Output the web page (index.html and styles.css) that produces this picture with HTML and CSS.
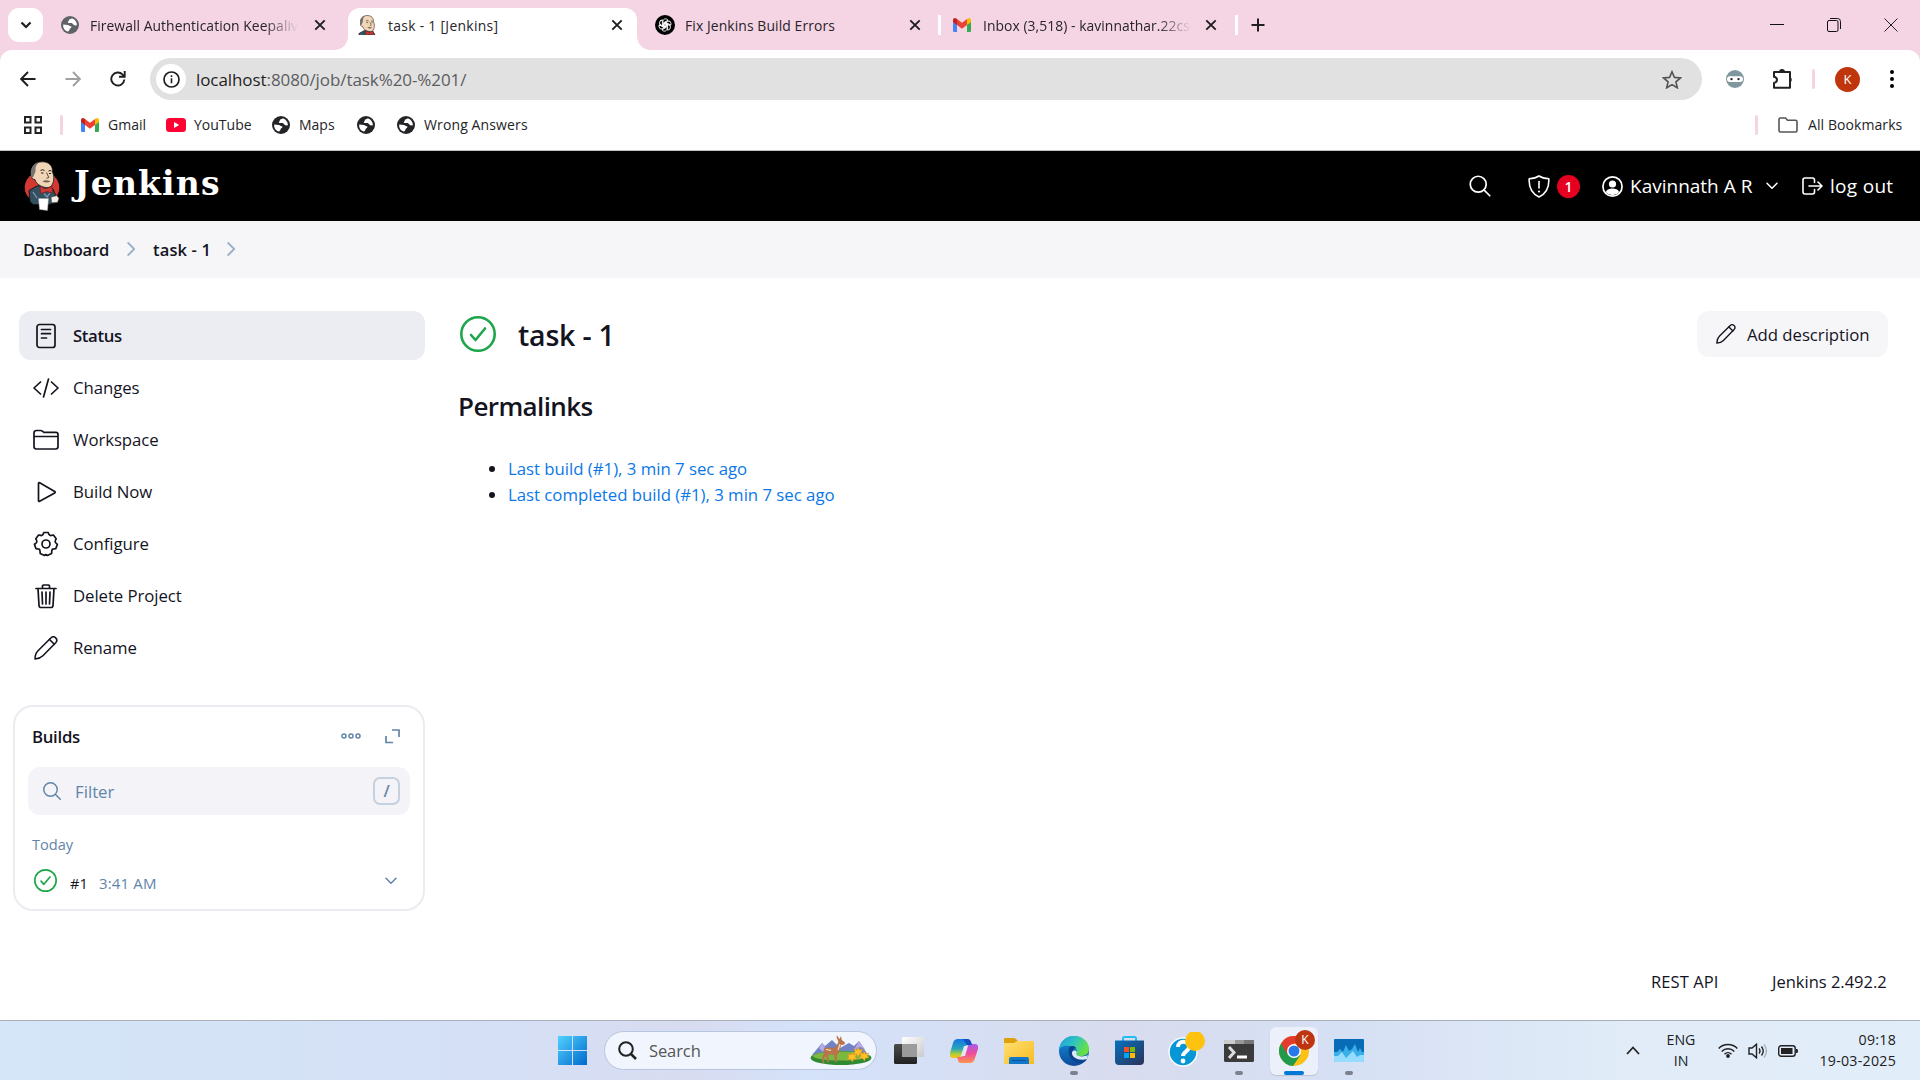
FILE: index.html
```html
<!DOCTYPE html>
<html lang="en">
<head>
<meta charset="utf-8">
<title>task - 1 [Jenkins]</title>
<link rel="stylesheet" href="styles.css">
</head>
<body>
<svg class="defs" width="0" height="0" aria-hidden="true">
  <defs>
    <symbol id="globe" viewBox="0 0 18 18"><circle cx="9" cy="9" r="9" fill="currentColor"/><path d="M2.2 8.5c1.5.3 3.2.2 4.6.4 1.6.2 1.8 1.400 3.300 1.300.7.5.1 1.700-.7 2-1 .3-.6 1.500-1.300 2.200l-1 1.200C4 15 1.800 12 2.200 8.500z" class="land"/><path d="M10.700 2.300c-.2 1-1.700.8-2.400 1.300-.8.5-.2 1.500-1 2-1 .5-.4 1.500.4 1.500 1.400.1 2.700-.4 3.700.5.8.8 1.400 1.700 2.500 1.800l2-.2C15.900 6 14 3.300 10.700 2.300z" class="land"/></symbol>
    <symbol id="close" viewBox="0 0 12 12"><path d="M1.300 1.300l9.400 9.400M10.700 1.300l-9.400 9.400" stroke="currentColor" stroke-width="1.900" fill="none"/></symbol>
    <symbol id="gmail" viewBox="0 0 18 14"><path d="M0 2v10.700C0 13.400.6 14 1.300 14H4V6z" fill="#4285f4"/><path d="M18 2v10.700c0 .7-.6 1.300-1.300 1.300H14V6z" fill="#34a853"/><path d="M14 1v6l4-3V2.200C18 .2 16-.6 14.500.6z" fill="#fbbc04"/><path d="M4 7V1l5 3.800L14 1v6L9 10.800z" fill="#ea4335"/><path d="M0 2.200V4l4 3V1L3.500.6C2-.6 0 .2 0 2.200z" fill="#c5221f"/></symbol>
    <symbol id="butler" viewBox="0 0 36 50"><path d="M5 29.500l8-4.500 9-1 7 4 3 7-.5 7-7 1.500H9l-3-3z" fill="#335061" stroke="#111" stroke-width=".9"/><path d="M8 13C6.500 6 11 1 18 .8 25 .6 29 5 28.500 11c.6 2 1.800 4 1.200 7-.2 5-2.700 9-7.200 8.600C17 26 12 23 11 18.500 8 18.500 6.800 16 8 13z" fill="#f0d6b7" stroke="#222" stroke-width=".9"/><path d="M7.200 16C5.500 8 9 2 15 1.500c-4 3-3.300 6-3.500 9L9 16.500z" fill="#77736f"/><path d="M16.500 9.500q2-1.500 4 0M24.500 10q1.500-1 3 0M17 12h2.500M25 12.500h2" stroke="#222" fill="none" stroke-width="1"/><path d="M22.500 11.500l2.300 5-2.300.8" stroke="#49352b" fill="none" stroke-width=".9"/><path d="M18.500 20.500q3-2.500 8 0-4 1.800-8 0z" fill="#74625a"/><path d="M16 25l5 3 7-2.500.5 6.500-5.500-1.500-6.500 2z" fill="#d33833" stroke="#6b1e1e" stroke-width=".7"/><path d="M20 32.500l3 3.500 3-3.800M9 31l4 6" stroke="#8199ac" fill="none" stroke-width="1.300"/><path d="M14.500 37.500h10l-1 12-8-1z" fill="#fff" stroke="#999" stroke-width=".5"/><path d="M27 36l6-1.500 2 3-1.500 4-6 .3z" fill="#f4eee7" stroke="#333" stroke-width=".6"/></symbol>
    <symbol id="search" viewBox="0 0 512 512"><g fill="none" stroke="currentColor" stroke-linecap="round" stroke-width="34"><path d="M221 64a157 157 0 1 0 157 157A157 157 0 0 0 221 64z"/><path d="M338 338l110 110"/></g></symbol>
    <symbol id="ok" viewBox="0 0 36 36"><circle cx="18" cy="18" r="16.700" fill="none" stroke="#1ea64b" stroke-width="2.600"/><path d="M11 19l4.500 5L25 12.500" fill="none" stroke="#1ea64b" stroke-width="2.600" stroke-linecap="round" stroke-linejoin="round"/></symbol>
    <symbol id="pencil" viewBox="0 0 24 24"><g fill="none" stroke="currentColor" stroke-width="1.600" stroke-linejoin="round" stroke-linecap="round"><path d="M1 23c0-3 1-6.200 3-8.200L16.800 2c1.500-1.400 3.600-1.400 4.900-.1s1.300 3.400 0 4.800L8.900 19.700C7 21.600 4 22.700 1 23z"/><path d="M15.500 3.500l4.800 4.800"/></g></symbol>
    <symbol id="down" viewBox="0 0 12 8"><path d="M1 1.200l5 5 5-5" fill="none" stroke="currentColor" stroke-width="1.500" stroke-linecap="round" stroke-linejoin="round"/></symbol>
    <symbol id="right" viewBox="0 0 9 14"><path d="M1.200 1l6 6-6 6" fill="none" stroke="#9ab0c9" stroke-width="1.800" stroke-linecap="round" stroke-linejoin="round"/></symbol>
    <linearGradient id="gw" x1="0" y1="0" x2="1" y2="1"><stop stop-color="#50d2ff"/><stop offset="1" stop-color="#0069cc"/></linearGradient>
    <linearGradient id="ge" x1="0" y1="0" x2="1" y2=".4"><stop stop-color="#1b9de0"/><stop offset=".55" stop-color="#30c4c0"/><stop offset="1" stop-color="#66e045"/></linearGradient>
    <linearGradient id="gb" x1="0" y1="0" x2="0" y2="1"><stop stop-color="#1790dd"/><stop offset="1" stop-color="#0c4a9b"/></linearGradient>
    <linearGradient id="gc1" x1="0" y1="0" x2="0" y2="1"><stop stop-color="#1673e8"/><stop offset=".5" stop-color="#25a6b8"/><stop offset=".8" stop-color="#b6cf35"/><stop offset="1" stop-color="#ffc20e"/></linearGradient>
    <linearGradient id="gc2" x1="0" y1="0" x2="0" y2="1"><stop stop-color="#a45bee"/><stop offset=".5" stop-color="#ed4d9a"/><stop offset="1" stop-color="#ff954c"/></linearGradient>
    <linearGradient id="gf" x1="0" y1="0" x2="1" y2="1"><stop stop-color="#ffdf72"/><stop offset="1" stop-color="#f8bb20"/></linearGradient>
    <linearGradient id="gs" x1="0" y1="0" x2="1" y2="1"><stop stop-color="#0672bf"/><stop offset="1" stop-color="#2b3158"/></linearGradient>
    <linearGradient id="gt" x1="0" y1="0" x2="0" y2="1"><stop stop-color="#4b4b4b"/><stop offset="1" stop-color="#222"/></linearGradient>
    <linearGradient id="gv" x1="0" y1="0" x2="1" y2="1"><stop stop-color="#fff"/><stop offset="1" stop-color="#c9cacc"/></linearGradient>
  </defs>
</svg>

<div class="tabstrip">
  <button class="tab-menu"><svg width="12" height="8"><path d="M1.500 1.500L6 6l4.500-4.500" fill="none" stroke="#1f1f1f" stroke-width="2.200"/></svg></button>
  <div class="tab tab-first"><svg class="favicon dim" width="18" height="18"><use href="#globe"/></svg><span class="tab-title fade">Firewall Authentication Keepalive</span><svg class="x" width="12" height="12"><use href="#close"/></svg></div>
  <div class="tab tab-active"><svg class="favicon" width="18" height="20" viewBox="4 0 28 32"><use href="#butler" width="36" height="50"/></svg><span class="tab-title">task - 1 [Jenkins]</span><svg class="x" width="12" height="12"><use href="#close"/></svg></div>
  <div class="tab tab-third"><svg class="favicon" width="20" height="20" viewBox="0 0 20 20"><circle cx="10" cy="10" r="10"/><g fill="none" stroke="#fff" stroke-width=".9"><path id="petal" d="M8 10.800V6.200C8 3.500 12 3 13 5.200L9 7.500v4"/><use href="#petal" transform="rotate(60 10 10)"/><use href="#petal" transform="rotate(120 10 10)"/><use href="#petal" transform="rotate(180 10 10)"/><use href="#petal" transform="rotate(240 10 10)"/><use href="#petal" transform="rotate(300 10 10)"/></g></svg><span class="tab-title">Fix Jenkins Build Errors</span><svg class="x" width="12" height="12"><use href="#close"/></svg></div>
  <div class="tab tab-fourth"><svg class="favicon" width="18" height="14"><use href="#gmail"/></svg><span class="tab-title fade">Inbox (3,518) - kavinnathar.22cse</span><svg class="x" width="12" height="12"><use href="#close"/></svg></div>
  <svg class="new-tab" width="14" height="14"><path d="M7 .5v13M.5 7h13" stroke="#1f1f1f" stroke-width="2"/></svg>
  <div class="window-buttons">
    <svg width="14" height="14"><path d="M0 6.500h14" stroke="#111"/></svg>
    <svg width="14" height="14"><g fill="none" stroke="#111"><rect x=".5" y="2.500" width="10.500" height="11" rx="1.500"/><path d="M3 .5h7.500a3 3 0 0 1 3 3V11"/></g></svg>
    <svg width="14" height="14"><path d="M.5.5l13 13M13.500.5l-13 13" stroke="#222"/></svg>
  </div>
</div>

<div class="browser-bar">
  <div class="toolbar">
    <div class="nav-buttons">
      <svg width="16" height="16"><path d="M15.500 8H1.500M8 1L1.200 8 8 15" fill="none" stroke="#1f1f1f" stroke-width="1.900"/></svg>
      <svg width="16" height="16"><path d="M.5 8h14M8 1l6.800 7L8 15" fill="none" stroke="#a0a0a0" stroke-width="1.900"/></svg>
      <svg width="16" height="16"><path d="M14.300 8.500A6.500 6.500 0 1 1 12.600 3.600L14.500 5.500M14.700 0v5.800H9" fill="none" stroke="#1f1f1f" stroke-width="1.900"/></svg>
    </div>
    <div class="omnibox">
      <span class="info"><svg width="17" height="17"><circle cx="8.500" cy="8.500" r="7.500" fill="none" stroke="#1f1f1f" stroke-width="1.700"/><path d="M8.500 7.300v5M8.500 4.300v1.700" stroke="#1f1f1f" stroke-width="1.600"/></svg></span>
      <span class="url"><b>localhost</b>:8080/job/task%20-%201/</span>
      <svg width="20" height="19" viewBox="0 0 20 19"><path d="M10 1.800l2.400 5.600 6.100.5-4.600 4 1.400 5.900L10 14.600l-5.300 3.200 1.400-5.900-4.600-4 6.100-.5z" fill="none" stroke="#555" stroke-width="1.600"/></svg>
    </div>
    <div class="extensions">
      <svg width="18" height="18"><circle cx="9" cy="9" r="9" fill="#7f979d"/><rect x="1" y="6.200" width="16" height="5.800" rx="2.900" fill="#fff"/><circle cx="5.500" cy="9.100" r="1.200" fill="#222"/><circle cx="12.500" cy="9.100" r="1.200" fill="#222"/></svg>
      <svg class="puzzle" width="21" height="22"><path d="M2 4h16v15.800H2V15c4-1 4-5.500 0-6.300z" fill="none" stroke="#222" stroke-width="2" stroke-linejoin="round"/><path d="M7 4a3 3 0 0 1 6 0zM18 9a3 3 0 0 1 0 5.500z" fill="#222"/></svg>
      <i class="divider"></i>
      <span class="avatar">K</span>
      <svg class="kebab" width="4" height="18"><circle cx="2" cy="2" r="2"/><circle cx="2" cy="9" r="2"/><circle cx="2" cy="16" r="2"/></svg>
    </div>
  </div>
  <div class="bookmarks">
    <svg width="18" height="18"><g fill="none" stroke="#222" stroke-width="2"><rect x="1" y="1" width="5.500" height="5.500"/><rect x="11.500" y="1" width="5.500" height="5.500"/><rect x="1" y="11.500" width="5.500" height="5.500"/><rect x="11.500" y="11.500" width="5.500" height="5.500"/></g></svg>
    <i class="divider"></i>
    <span class="bookmark bm-gmail"><svg width="18" height="14"><use href="#gmail"/></svg>Gmail</span>
    <span class="bookmark bm-youtube"><svg width="20" height="14"><rect width="20" height="14" rx="3.500" fill="#ff0033"/><path d="M8 4l5.200 3L8 10z" fill="#fff"/></svg>YouTube</span>
    <span class="bookmark bm-maps"><svg width="18" height="18"><use href="#globe"/></svg>Maps</span>
    <span class="bookmark bm-blank"><svg width="18" height="18"><use href="#globe"/></svg></span>
    <span class="bookmark bm-wrong"><svg width="18" height="18"><use href="#globe"/></svg>Wrong Answers</span>
    <i class="divider divider-end"></i>
    <span class="bookmark bm-all"><svg width="20" height="16"><path d="M1 2.500Q1 1 2.500 1H7.500l2 2.200h8q1.500 0 1.500 1.500v8.800q0 1.500-1.500 1.500h-15Q1 15 1 13.500z" fill="none" stroke="#555" stroke-width="1.600"/></svg>All Bookmarks</span>
  </div>
</div>

<header class="jenkins-header">
  <svg class="logo" width="36" height="50"><ellipse cx="18" cy="26.500" rx="17.300" ry="16" fill="#d33833"/><use href="#butler"/></svg>
  <span class="brand">Jenkins</span>
  <svg class="h-search" width="26" height="26"><use href="#search"/></svg>
  <svg class="shield" width="22" height="23"><g fill="none" stroke="#fff" stroke-width="1.600" stroke-linecap="round" stroke-linejoin="round"><path d="M11 1c3 2 6 2.500 9.800 2.700C21.300 12 18.500 18.500 11 22 3.500 18.500.7 12 1.200 3.700 5 3.500 8 3 11 1z"/><path d="M11 6.500v6.500"/></g><circle cx="11" cy="16.500" r="1.100" fill="#fff"/></svg>
  <span class="badge">1</span>
  <svg class="user" width="21" height="21"><circle cx="10.500" cy="10.500" r="9.600" fill="none" stroke="#fff" stroke-width="1.700"/><circle cx="10.500" cy="8" r="3.600" fill="#fff"/><path d="M3.800 16.300c1-3 4-3.700 6.700-3.700s5.700.7 6.700 3.700a9 9 0 0 1-13.400 0z" fill="#fff"/></svg>
  <span class="user-name">Kavinnath A R</span>
  <svg class="user-down" width="12" height="8"><use href="#down"/></svg>
  <svg class="exit" width="21" height="18"><path d="M12.500 5.500V3Q12.500 1 10.500 1H3Q1 1 1 3v12q0 2 2 2h7.500q2 0 2-2v-2.500M7 9h13M16 5l4 4-4 4" fill="none" stroke="#fff" stroke-width="1.600" stroke-linecap="round" stroke-linejoin="round"/></svg>
  <span class="log-out">log out</span>
</header>

<nav class="breadcrumbs">
  <span class="crumb crumb-home">Dashboard</span><svg width="9" height="14"><use href="#right"/></svg>
  <span class="crumb crumb-task">task - 1</span><svg width="9" height="14"><use href="#right"/></svg>
</nav>

<div class="page">
  <aside class="side">
    <ul class="tasks">
      <li class="task selected"><svg width="26" height="26"><g fill="none" stroke="currentColor" stroke-width="1.700" stroke-linecap="round"><rect x="4" y="1.500" width="18" height="23" rx="2.500"/><path d="M8.500 6.500h9M8.500 10.700h9M8.500 15h5"/></g></svg><span>Status</span></li>
      <li class="task"><svg width="26" height="26"><path d="M7.500 7L1 13l6.500 6M18.500 7l6.500 6-6.500 6M15.500 4l-5 18" fill="none" stroke="currentColor" stroke-width="1.700" stroke-linecap="round" stroke-linejoin="round"/></svg><span>Changes</span></li>
      <li class="task"><svg width="26" height="26"><path d="M1 9.500h24M1 6q0-2.500 2.500-2.500h4q1.200 0 2.200.8l1.200 1h12q2.100 0 2.100 2.100v12.200q0 2.400-2.400 2.400H3.400Q1 22 1 19.600z" fill="none" stroke="currentColor" stroke-width="1.700"/></svg><span>Workspace</span></li>
      <li class="task"><svg width="26" height="26"><path d="M5.500 4.500v17q0 1.300 1.200.8l15-8.400q1.200-.8 0-1.500l-15-8.600q-1.200-.6-1.200.7z" fill="none" stroke="currentColor" stroke-width="1.700"/></svg><span>Build Now</span></li>
      <li class="task"><svg width="26" height="26"><circle cx="13" cy="13" r="4" fill="none" stroke="currentColor" stroke-width="1.700"/><path d="M10.200 3.200L10.800 1.500h4.400l.6 1.700q.8 1.700 2.600 1.200l2-.4 2.800 3.700-.8 1.700q-.9 1.600.6 2.800l1.400 1.100-1.600 4.300-2 .3q-1.900.1-2 2l-.2 2.500-4.200 2-1.500-.9-1.500.9-4.200-2-.2-2.500q-.1-1.900-2-2l-2-.3-1.600-4.300L3 12.200q1.500-1.200.6-2.800l-.8-1.700L5.600 4l2 .4q1.800.5 2.600-1.200z" fill="none" stroke="currentColor" stroke-width="1.700" stroke-linejoin="round"/></svg><span>Configure</span></li>
      <li class="task"><svg width="26" height="26"><path d="M3 5.500h20M9.500 5.500V3q0-1 1-1h5q1 0 1 1v2.500M5 5.500l1 17q.1 2 2 2h10q1.900 0 2-2l1-17M9 9l.5 12M13 9v12M17 9l-.5 12" fill="none" stroke="currentColor" stroke-width="1.700" stroke-linecap="round"/></svg><span>Delete Project</span></li>
      <li class="task"><svg width="24" height="24"><use href="#pencil"/></svg><span>Rename</span></li>
    </ul>
    <section class="builds">
      <div class="builds-head">
        <h2>Builds</h2>
        <svg width="20" height="8"><g fill="none" stroke="#6284a9" stroke-width="1.500"><circle cx="3" cy="4" r="2"/><circle cx="10" cy="4" r="2"/><circle cx="17" cy="4" r="2"/></g></svg>
        <svg width="15" height="15"><path d="M7 1h7v7M1 7v6.500h7" fill="none" stroke="#6284a9" stroke-width="1.700"/></svg>
      </div>
      <div class="filter"><svg width="22" height="22"><use href="#search"/></svg><span>Filter</span><kbd>/</kbd></div>
      <div class="today">Today</div>
      <div class="build"><svg width="23" height="23" viewBox="0 0 36 36"><use href="#ok"/></svg><span class="num">#1</span><span class="time">3:41 AM</span><svg width="12" height="8"><use href="#down"/></svg></div>
    </section>
  </aside>
  <main class="main">
    <div class="main-head">
      <svg width="36" height="36"><use href="#ok"/></svg>
      <h1>task - 1</h1>
      <button class="describe"><svg width="20" height="20" viewBox="0 0 24 24"><use href="#pencil"/></svg><span>Add description</span></button>
    </div>
    <h2 class="permalinks">Permalinks</h2>
    <ul class="links">
      <li><a class="link-a">Last build (#1), 3 min 7 sec ago</a></li>
      <li><a class="link-b">Last completed build (#1), 3 min 7 sec ago</a></li>
    </ul>
  </main>
</div>

<footer class="footer"><span class="rest">REST API</span><span class="version">Jenkins 2.492.2</span></footer>

<div class="taskbar">
  <div class="start"><svg width="29" height="29"><path d="M0 0h14v14H0zM15 0h14v14H15zM0 15h14v14H0zM15 15h14v14H15z" fill="url(#gw)"/></svg></div>
  <div class="task-search">
    <svg width="19" height="19"><circle cx="8" cy="8" r="6.800" fill="none" stroke="#222" stroke-width="2"/><path d="M13 13l5 5" stroke="#222" stroke-width="2.500"/></svg>
    <span>Search</span>
    <svg class="scene" width="62" height="31" viewBox="0 0 62 31"><path d="M2 20L12 8l3 3 7-6 8 8 9-5 5 3 5-5 9 14z" fill="#7083c5"/><path d="M12 8l3 3-2 6-4-4zM49 6l6 8-5-2-6 3z" fill="#b9a9e6"/><ellipse cx="31" cy="23" rx="30.500" ry="7" fill="#2f8a32"/><ellipse cx="31" cy="21" rx="28" ry="4.500" fill="#7cb83e"/><path d="M14 14q1-2 4-1.500l7 .5 3.500-6-2-5 .5-1.500 2.500 3.500L31 1l.8 4 3.200 2.500-.5 2-3.500.5-1.500 7-2.500 3-.3 7H25l-.8-7-5.200-.8-.5 2 .5 6h-1.600l-1.200-6L14 23l.3 5h-1.600l-.7-6 2-4z" fill="#b9744b"/><path d="M16 14.500l5 .8M30 9l-2 6" stroke="#f3ddbd" stroke-width="1.200"/><g fill="#ffc127" stroke="#e68d16" stroke-width=".5"><path id="flower" d="M48 12l1.500 3 3.500-1-2 3 2 2-3.500 0-1 3-2-3-3.500 1 2-3-1-3 3 1z"/><use href="#flower" x="-6" y="5"/><use href="#flower" x="6" y="4"/></g></svg>
  </div>
  <div class="apps">
    <div class="app"><svg width="30" height="29"><rect y="8" width="23" height="20" rx="1.500" fill="url(#gt)"/><rect x="8" y="1" width="22" height="20" rx="1" fill="url(#gv)"/><path d="M8 8h15v13H8z" fill="#9b9b9b"/></svg></div>
    <div class="app"><svg width="28" height="26" viewBox="0 0 28 26"><path d="M8 1h9q3 0 4 3l1 3h-4q-3 0-4 3l-3 8q-1 2-3 2H3q-4 0-3-5L3 5q1-4 5-4z" fill="url(#gc1)"/><path d="M20 25h-9q-3 0-3-3l-1-3h3q3 0 4-3l3-7q1-3 4-3h4q4 0 3 5l-3 9q-1 5-5 5z" fill="url(#gc2)"/><path d="M14 8h4l-3 10h-4z" fill="#e8e4f6"/><path d="M13 1h4q3 0 4 3l1 3h-5z" fill="#134fc0"/></svg></div>
    <div class="app"><svg width="30" height="28"><path d="M0 2q0-1 1-1h9q1 0 2 1l2 2v4H0z" fill="#dea00c"/><path d="M0 6h10l3-2h16q1 0 1 1v22H0z" fill="url(#gf)"/><path d="M5 27v-5q0-2 2-2h16q2 0 2 2v5z" fill="#1277c8"/><path d="M8 23.500h14" stroke="#08569b"/></svg></div>
    <div class="app running"><svg width="30" height="30"><circle cx="15" cy="15" r="15" fill="url(#gb)"/><path d="M0 14C1 5 7 0 15 0c9 0 15 6 15 13 0 5-4 7-8 7-4 0-6-1-4-4 0-4-3-6-7-6C5 9 1 11 0 14z" fill="url(#ge)"/><path d="M10 12c-2 8 3 14 11 15 3 0 5-1 7-4-6 2-14 0-15-6 0-3 2-5 4-5-2-3-6-2-7 0z" fill="#0b438c"/><path d="M18 16c-3 4 5 6 11 3l-1 4c-8 2-15-1-15-6 0-2 3-4 5-1z" fill="#dceaf7"/></svg></div>
    <div class="app"><svg width="29" height="29"><path d="M8 6V2.500Q8 1 9.500 1h10Q21 1 21 2.500V6" fill="none" stroke="#23bdf2" stroke-width="2"/><path d="M0 4.500h29V25q0 4-4 4H4q-4 0-4-4z" fill="url(#gs)"/><path d="M9 11h5v5H9z" fill="#f25022"/><path d="M15 11h5v5h-5z" fill="#7fba00"/><path d="M9 17h5v5H9z" fill="#00a4ef"/><path d="M15 17h5v5h-5z" fill="#ffb900"/></svg></div>
    <div class="app"><svg width="44" height="38"><circle cx="21" cy="20" r="14" fill="#0796d6" stroke="#f5fbff" stroke-width="1.500"/><path d="M16 15c0-7 11-7 11 0 0 4-6 5-6 9" fill="none" stroke="#fff" stroke-width="4"/><circle cx="21" cy="29" r="2.400" fill="#fff"/><circle cx="33" cy="9" r="10" fill="#ffc20e"/></svg></div>
    <div class="app running"><svg width="30" height="23"><rect width="30" height="22" y="1" rx="1.500" fill="#3b3b3b"/><path d="M0 5V2q0-1 1-1h10v4z" fill="#ccc"/><path d="M11 1h9v4h-9z" fill="#999"/><path d="M20 1h9q1 0 1 1v3H20z" fill="#777"/><path d="M5 8l5 5.500L5 19" fill="none" stroke="#ddd" stroke-width="3"/><path d="M13 18h10" stroke="#fff" stroke-width="3"/></svg></div>
    <div class="app active"><svg width="30" height="30"><circle cx="15" cy="15" r="15" fill="#fbc116"/><path d="M15 15L2 7.500A15 15 0 0 0 14 30l7.500-11z" fill="#219a4b"/><path d="M15 7.500h13A15 15 0 0 0 2 7.500l6.500 11z" fill="#e33b2e"/><circle cx="15" cy="15" r="7" fill="#fff"/><circle cx="15" cy="15" r="5.500" fill="#2878e9"/></svg><span class="profile">K</span></div>
    <div class="app running"><svg width="30" height="23"><rect width="30" height="23" rx="1" fill="#086bb7"/><path d="M0 13h3l3-3 3 3 3-7 3 6 3-2 3-5 3 8 2-4 2 4h2v9H0z" fill="#3aaee7"/><path d="M0 17h4l4-4 4 6 3-3 4-4 4 6 3-2h4v6q0 1-1 1H1q-1 0-1-1z" fill="#95dcff"/></svg></div>
  </div>
  <div class="tray">
    <svg width="14" height="9"><path d="M1 8l6-6.500L13 8" fill="none" stroke="#222" stroke-width="1.800"/></svg>
    <div class="lang">ENG<br>IN</div>
    <svg class="wifi" width="20" height="15"><g fill="none" stroke="#222" stroke-width="1.500"><path d="M.7 5.500a13 13 0 0 1 18.600 0M3.700 8.500a8.800 8.800 0 0 1 12.600 0M6.500 11.200a5 5 0 0 1 7 0"/></g><circle cx="10" cy="13" r="1.900" fill="#222"/></svg>
    <svg class="sound" width="20" height="16"><g fill="none" stroke="#222" stroke-width="1.400"><path d="M1 5h3l4.500-3.800v13.600L4 11H1zM11 5.500q2 2.500 0 5M13.500 3.500q3.500 4.500 0 9"/><path d="M16 1.500q5 6.500 0 13" stroke="#aab1ba"/></g></svg>
    <svg width="20" height="12"><rect x=".7" y=".7" width="16.500" height="10.600" rx="2.500" fill="none" stroke="#222" stroke-width="1.400"/><rect x="3" y="3" width="11.500" height="6" fill="#222"/><path d="M18 4h1q1 0 1 2t-1 2h-1z" fill="#222"/></svg>
    <div class="clock">09:18<br>19-03-2025</div>
  </div>
</div>
</body>
</html>
```
FILE: styles.css
```css
* { box-sizing: border-box; }
html, body { margin: 0; width: 1920px; height: 1080px; overflow: hidden; }
body { display: flex; flex-direction: column; background: #fff; color: #14141f; font-family: "Open Sans", "Noto Sans", sans-serif; font-size: 16.800px; white-space: nowrap; }
svg { display: block; flex: none; }
ul { margin: 0; padding: 0; list-style: none; }
h1, h2 { margin: 0; font-weight: 600; }
button { border: 0; padding: 0; font: inherit; color: inherit; }
.defs { position: absolute; }
.land { fill: #fff; }

/* Browser tabs */
.tabstrip { flex: none; display: flex; align-items: center; height: 62px; margin-bottom: -12px; padding-bottom: 12px; background: #f5d5e3; color: #242226; font-size: 13.900px; }
.tab-menu { display: flex; align-items: center; justify-content: center; width: 35px; height: 34px; margin-left: 8px; border-radius: 11px; background: #fff; }
.tab { display: flex; align-items: center; height: 50px; color: #27242a; }
.tab .x { margin-left: auto; color: #1f1f1f; }
.tab-title { overflow: hidden; margin-left: 11px; padding-top: 1px; line-height: 24px; }
.fade { width: 208px; -webkit-mask-image: linear-gradient(90deg, #000 84%, transparent); mask-image: linear-gradient(90deg, #000 84%, transparent); }
.dim { color: #5f6368; }
.tab-first .land { fill: #f5d5e3; }
.tab-first { width: 305px; padding: 0 22px 0 18px; letter-spacing: .05px; }
.tab-active { position: relative; width: 289px; height: 42px; margin-top: 8px; padding: 0 14px 8px 10px; border-radius: 12px 12px 0 0; background: #fff; letter-spacing: .3px; }
.tab-active .tab-title { margin-left: 12px; }
.tab-active::before, .tab-active::after { content: ""; position: absolute; bottom: 0; width: 13px; height: 13px; }
.tab-active::before { left: -13px; background: radial-gradient(circle at 0 0, transparent 12.500px, #fff 13px); }
.tab-active::after { right: -13px; background: radial-gradient(circle at 100% 0, transparent 12.500px, #fff 13px); }
.tab-third { width: 301px; padding: 0 17px 0 18px; letter-spacing: .1px; }
.tab-third .tab-title { margin-left: 10px; }
.tab-fourth { width: 300px; height: 20px; padding: 0 18px 0 12px; border-left: 3px solid #fff; border-right: 3px solid #fff; letter-spacing: .05px; }
.tab-fourth .tab-title { margin-left: 12px; }
.new-tab { margin-left: 13px; }
.window-buttons { display: flex; gap: 43px; margin-left: auto; padding-right: 22px; }

/* Address bar and bookmarks */
.browser-bar { flex: none; position: relative; height: 101px; border-bottom: 1px solid #bfc2c4; border-radius: 12px 12px 0 0; background: #fff; }
.toolbar { display: flex; align-items: center; height: 58px; }
.nav-buttons { display: flex; gap: 29px; width: 150px; padding-left: 20px; }
.omnibox { display: flex; align-items: center; width: 1552px; height: 42px; padding: 0 20px 0 6px; border-radius: 21px; background: #e1e1e1; color: #5c5d60; }
.info { display: flex; align-items: center; justify-content: center; width: 30px; height: 30px; border-radius: 50%; background: #fff; }
.url { flex: 1; padding-left: 10px; font-size: 17px; letter-spacing: -.08px; }
.url b { font-weight: 400; color: #1f1f1f; }
.extensions { display: flex; align-items: center; padding-left: 24px; }
.puzzle { margin-left: 28px; }
.divider { width: 3px; height: 20px; border-radius: 2px; background: #f5d5e3; }
.extensions .divider { margin-left: 19px; }
.avatar { width: 25px; height: 25px; margin-left: 20px; border-radius: 50%; background: #bf360c; color: #fff; font-size: 13px; line-height: 25px; text-align: center; }
.kebab { margin-left: 30px; }
.bookmarks { display: flex; align-items: center; height: 33px; padding: 0 18px 0 24px; font-size: 14px; letter-spacing: 0; color: #242428; }
.bookmarks .divider { margin-left: 18px; }
.bookmarks .divider-end { margin-left: auto; }
.bookmark { display: flex; align-items: center; gap: 9px; }
.bm-gmail { width: 85px; margin-left: 18px; }
.bm-youtube { width: 106px; gap: 8px; }
.bm-maps { width: 85px; }
.bm-blank { width: 40px; }
.bm-wrong { letter-spacing: .12px; }
.bm-all { width: 124px; margin-left: 20px; gap: 10px; letter-spacing: .08px; }

/* Jenkins header */
.jenkins-header { flex: none; display: flex; align-items: center; height: 70px; padding-left: 24px; background: #000; color: #fff; font-size: 19px; font-weight: 600; }
.brand { width: 1393px; margin-left: 14px; padding-bottom: 5px; font: bold 33px "DejaVu Serif", serif; letter-spacing: 1.150px; }
.shield { margin-left: 35px; }
.badge { width: 23px; height: 23px; margin-left: 7px; border-radius: 50%; background: #e6001f; font-size: 14px; line-height: 23px; text-align: center; }
.user { margin-left: 22px; }
.user-name { width: 136px; padding-left: 7px; font-weight: 500; }
.user-down { margin-left: 7px; }
.exit { margin-left: 24px; }
.log-out { margin-left: 7px; font-weight: 500; letter-spacing: .3px; }
.breadcrumbs { flex: none; display: flex; align-items: center; height: 57px; padding: 0 0 1px 23px; background: #f6f6f8; font-size: 16.500px; font-weight: 600; letter-spacing: -.15px; }
.crumb-home { width: 104px; }
.crumb-task { width: 74px; margin-left: 17px; letter-spacing: .15px; }

/* Page body */
.page { flex: none; display: flex; height: 672px; padding-top: 33px; }
.side { width: 458px; padding-left: 13px; }
.tasks { display: flex; flex-direction: column; gap: 3px; padding-left: 6px; }
.task { display: flex; align-items: center; width: 406px; height: 49px; padding-left: 14px; border-radius: 12px; letter-spacing: -.08px; }
.task svg { width: 26px; }
.task span { margin-left: 14px; }
.selected { background: #ecedf3; font-weight: 600; letter-spacing: -.4px; }
.builds { width: 412px; height: 206px; margin-top: 33px; padding: 0 13px; border: 2px solid #ebebf2; border-radius: 20px; }
.builds-head { display: flex; align-items: center; height: 60px; padding: 0 10px 2px 4px; gap: 24px; }
.builds-head h2 { flex: 1; font-size: 16.800px; letter-spacing: -.3px; }
.filter { display: flex; align-items: center; height: 48px; padding: 0 10px 0 13px; border-radius: 12px; background: #f3f3f8; color: #6284a9; }
.filter span { flex: 1; padding-left: 12px; }
.filter kbd { width: 27px; height: 28px; border: 2px solid #c6d1df; border-radius: 7px; font: 600 16px/24px "Open Sans", sans-serif; text-align: center; }
.today { height: 50px; padding: 18px 4px 0; color: #6284a9; font-size: 14.600px; line-height: 22px; }
.build { display: flex; align-items: center; height: 30px; padding: 0 13px 0 6px; font-size: 14.600px; }
.num { width: 28px; margin-left: 13px; padding-top: 5px; }
.time { flex: 1; padding: 5px 0 0 1px; color: #6284a9; font-size: 15px; letter-spacing: .15px; }
.build svg:last-child { color: #6284a9; margin-top: 1px; }
.main { flex: 1; padding-right: 32px; }
.main-head { display: flex; align-items: center; height: 46px; padding-left: 2px; }
.main-head h1 { flex: 1; padding: 2px 0 0 22px; font-size: 28.500px; letter-spacing: -.2px; }
.describe { display: flex; align-items: center; width: 191px; height: 46px; padding-left: 19px; border-radius: 12px; background: #f6f6f9; }
.describe span { margin-left: 11px; letter-spacing: -.05px; }
.permalinks { height: 36px; margin-top: 31px; font-size: 26px; line-height: 36px; letter-spacing: -.6px; }
.links { margin-top: 32px; padding-left: 50px; list-style: disc; line-height: 26px; }
.links a { color: #0b78e8; letter-spacing: -.02px; }
.footer { flex: none; display: flex; align-items: center; justify-content: flex-end; height: 70px; padding: 0 33px 8px 0; font-size: 16.500px; }
.rest { width: 121px; letter-spacing: .1px; }
.version { width: 115px; }

/* Desktop taskbar */
.taskbar { flex: none; display: flex; align-items: center; height: 60px; border-top: 1px solid #a9b0bc; background: linear-gradient(90deg, #d4e6f7 0, #d5e0f6 25%, #d8dcf0 36%, #d4e2fa 42%, #d8dcee 58%, #d6e0f4 70%, #e1ecf8 85%, #e1edf8 100%); color: #202124; }
.start { width: 604px; padding-left: 558px; }
.task-search { display: flex; align-items: center; width: 273px; height: 39px; padding: 0 4px 0 13px; border: 1px solid #b8c5df; border-radius: 20px; background: #f1f5fd; color: #555; }
.task-search span { flex: 1; padding-left: 12px; font-size: 16.500px; letter-spacing: -.1px; }
.apps { display: flex; gap: 7px; margin-left: 8px; }
.app { position: relative; display: flex; align-items: center; justify-content: center; width: 48px; height: 48px; border-radius: 6px; }
.running::after, .active::after { content: ""; position: absolute; bottom: 0; left: 20px; width: 8px; height: 4px; border-radius: 2px; background: #7c828d; }
.active { background: #ecf0fa; box-shadow: 0 1px 1px #bcc3d5; }
.active::after { left: 14px; width: 20px; background: #0078d7; }
.profile { position: absolute; top: 3px; left: 25px; width: 20px; height: 20px; border-radius: 50%; background: #be3512; color: #fff; font-size: 12px; line-height: 20px; text-align: center; }
.tray { display: flex; align-items: center; margin-left: auto; padding-right: 24px; font-size: 14.200px; line-height: 20.500px; }
.lang { width: 40px; margin-left: 21px; text-align: center; }
.wifi { margin-left: 17px; }
.sound { margin: 0 10px; }
.clock { width: 98px; text-align: right; letter-spacing: .25px; }
```
